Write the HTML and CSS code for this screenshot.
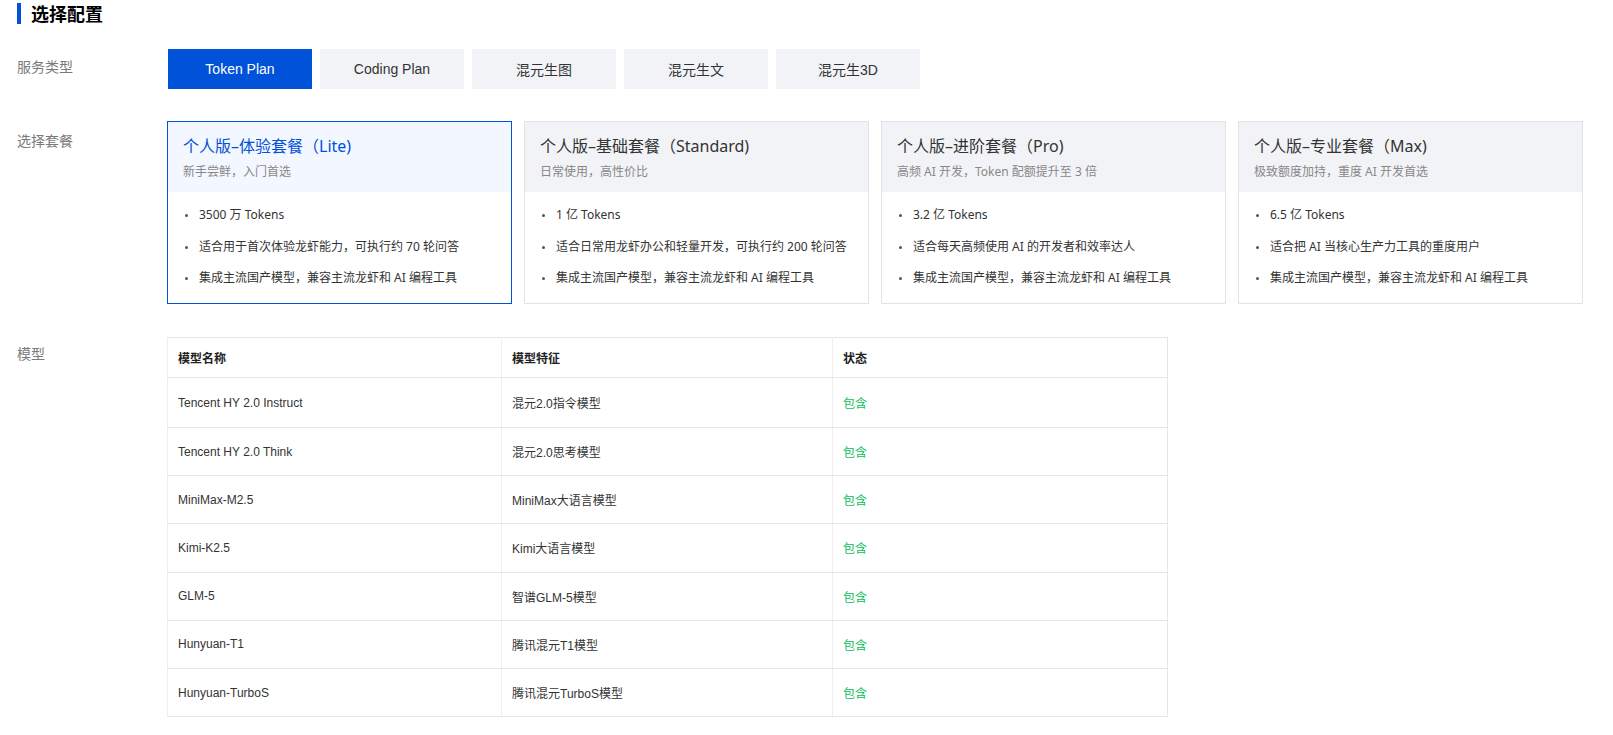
FILE: index.html
```html
<!DOCTYPE html>
<html lang="zh-CN">
<head>
<meta charset="utf-8">
<title>选择配置</title>
<link rel="stylesheet" href="styles.css">
</head>
<body>
<div class="page">
  <h2 class="title">选择配置</h2>

  <div class="row row-tabs">
    <div class="label">服务类型</div>
    <div class="tabs">
      <div class="tab active">Token Plan</div>
      <div class="tab">Coding Plan</div>
      <div class="tab">混元生图</div>
      <div class="tab">混元生文</div>
      <div class="tab">混元生3D</div>
    </div>
  </div>

  <div class="row row-plans">
    <div class="label label-plans">选择套餐</div>
    <div class="plans">
      <div class="plan active">
        <div class="plan-head">
          <div class="plan-name">个人版–体验套餐（Lite)</div>
          <div class="plan-sub">新手尝鲜，入门首选</div>
        </div>
        <ul class="plan-body">
          <li>3500 万 Tokens</li>
          <li>适合用于首次体验龙虾能力，可执行约 70 轮问答</li>
          <li>集成主流国产模型，兼容主流龙虾和 AI 编程工具</li>
        </ul>
      </div>
      <div class="plan">
        <div class="plan-head">
          <div class="plan-name">个人版–基础套餐（Standard)</div>
          <div class="plan-sub">日常使用，高性价比</div>
        </div>
        <ul class="plan-body">
          <li>1 亿 Tokens</li>
          <li>适合日常用龙虾办公和轻量开发，可执行约 200 轮问答</li>
          <li>集成主流国产模型，兼容主流龙虾和 AI 编程工具</li>
        </ul>
      </div>
      <div class="plan">
        <div class="plan-head">
          <div class="plan-name">个人版–进阶套餐（Pro)</div>
          <div class="plan-sub">高频 AI 开发，Token 配额提升至 3 倍</div>
        </div>
        <ul class="plan-body">
          <li>3.2 亿 Tokens</li>
          <li>适合每天高频使用 AI 的开发者和效率达人</li>
          <li>集成主流国产模型，兼容主流龙虾和 AI 编程工具</li>
        </ul>
      </div>
      <div class="plan">
        <div class="plan-head">
          <div class="plan-name">个人版–专业套餐（Max)</div>
          <div class="plan-sub">极致额度加持，重度 AI 开发首选</div>
        </div>
        <ul class="plan-body">
          <li>6.5 亿 Tokens</li>
          <li>适合把 AI 当核心生产力工具的重度用户</li>
          <li>集成主流国产模型，兼容主流龙虾和 AI 编程工具</li>
        </ul>
      </div>
    </div>
  </div>

  <div class="row row-models">
    <div class="label label-models">模型</div>
    <table class="models">
      <thead>
        <tr><th class="col1">模型名称</th><th class="col2">模型特征</th><th class="col3">状态</th></tr>
      </thead>
      <tbody>
        <tr class="first"><td>Tencent HY 2.0 Instruct</td><td>混元2.0指令模型</td><td class="ok">包含</td></tr>
        <tr><td>Tencent HY 2.0 Think</td><td>混元2.0思考模型</td><td class="ok">包含</td></tr>
        <tr><td>MiniMax-M2.5</td><td>MiniMax大语言模型</td><td class="ok">包含</td></tr>
        <tr><td>Kimi-K2.5</td><td>Kimi大语言模型</td><td class="ok">包含</td></tr>
        <tr><td>GLM-5</td><td>智谱GLM-5模型</td><td class="ok">包含</td></tr>
        <tr><td>Hunyuan-T1</td><td>腾讯混元T1模型</td><td class="ok">包含</td></tr>
        <tr><td>Hunyuan-TurboS</td><td>腾讯混元TurboS模型</td><td class="ok">包含</td></tr>
      </tbody>
    </table>
  </div>
</div>
</body>
</html>
```

FILE: styles.css
```css
* { box-sizing: border-box; }
html, body { margin: 0; padding: 0; background: #fff; }
body {
  font-family: "Liberation Sans", Arial, "Noto Sans CJK SC", sans-serif;
  color: #333;
}
.page { padding: 3px 0 20px 17px; }

.title {
  margin: 0;
  font-size: 18px;
  line-height: 21px;
  font-weight: 700;
  color: #000;
  border-left: 4px solid #0052d9;
  padding-left: 10px;
  font-family: "Noto Sans CJK SC", sans-serif;
}

.row { display: flex; align-items: flex-start; }
.row-tabs { margin-top: 25px; }
.row-plans { margin-top: 32px; }
.row-models { margin-top: 33px; }

.label {
  width: 150px;
  flex: none;
  font-size: 14px;
  line-height: 20px;
  color: #7a7a7a;
  padding-top: 7px;
  font-family: "Noto Sans CJK SC", sans-serif;
}
.label-plans { padding-top: 9px; }
.label-models { padding-top: 6px; }

.tabs { display: flex; gap: 8px; margin-left: 1px; }
.tab {
  width: 144px;
  height: 40px;
  display: flex;
  align-items: center;
  justify-content: center;
  background: #f2f3f6;
  color: #333;
  font-size: 14px;
}
.tab.active { background: #0052d9; color: #fff; }

.plans { display: grid; grid-template-columns: repeat(4, 345px); gap: 12px; }
.plan {
  border: 1px solid #e1e3e8;
  background: #fff;
  font-family: "Noto Sans", "Noto Sans CJK SC", sans-serif;
}
.plan.active { border-color: #0052d9; }
.plan-head {
  background: #f2f3f6;
  height: 70px;
  padding: 13px 15px 0;
}
.plan.active .plan-head { background: #f3f7ff; }
.plan-name { font-size: 16px; line-height: 22px; color: #333; }
.plan.active .plan-name { color: #0052d9; }
.plan-sub { font-size: 12px; line-height: 18px; color: #888; margin-top: 6px; }

.plan-body {
  list-style: none;
  margin: 0;
  padding: 13px 15px 15px;
}
.plan-body li {
  position: relative;
  padding-left: 16px;
  font-size: 12px;
  line-height: 20px;
  color: #333;
  white-space: nowrap;
}
.plan-body li + li { margin-top: 11.5px; }
.plan-body li::before {
  content: "";
  position: absolute;
  left: 2px;
  top: 9px;
  width: 3px;
  height: 3px;
  border-radius: 50%;
  background: #555;
}

.models {
  width: 1000px;
  border-collapse: collapse;
  border: 1px solid #e6e6e6;
  font-size: 12px;
  table-layout: fixed;
}
.col1 { width: 334px; }
.col2 { width: 331px; }
.col3 { width: 335px; }
.models th, .models td {
  text-align: left;
  padding: 0 10px;
  border-bottom: 1px solid #e6e6e6;
  border-left: 1px solid #eeeeee;
  color: #333;
}
.models th { height: 40px; font-weight: 700; color: #222; }
.models td { height: 48.2px; }
.models tr.first td { height: 50px; }
.models td.ok { color: #0abf5b; }
```
